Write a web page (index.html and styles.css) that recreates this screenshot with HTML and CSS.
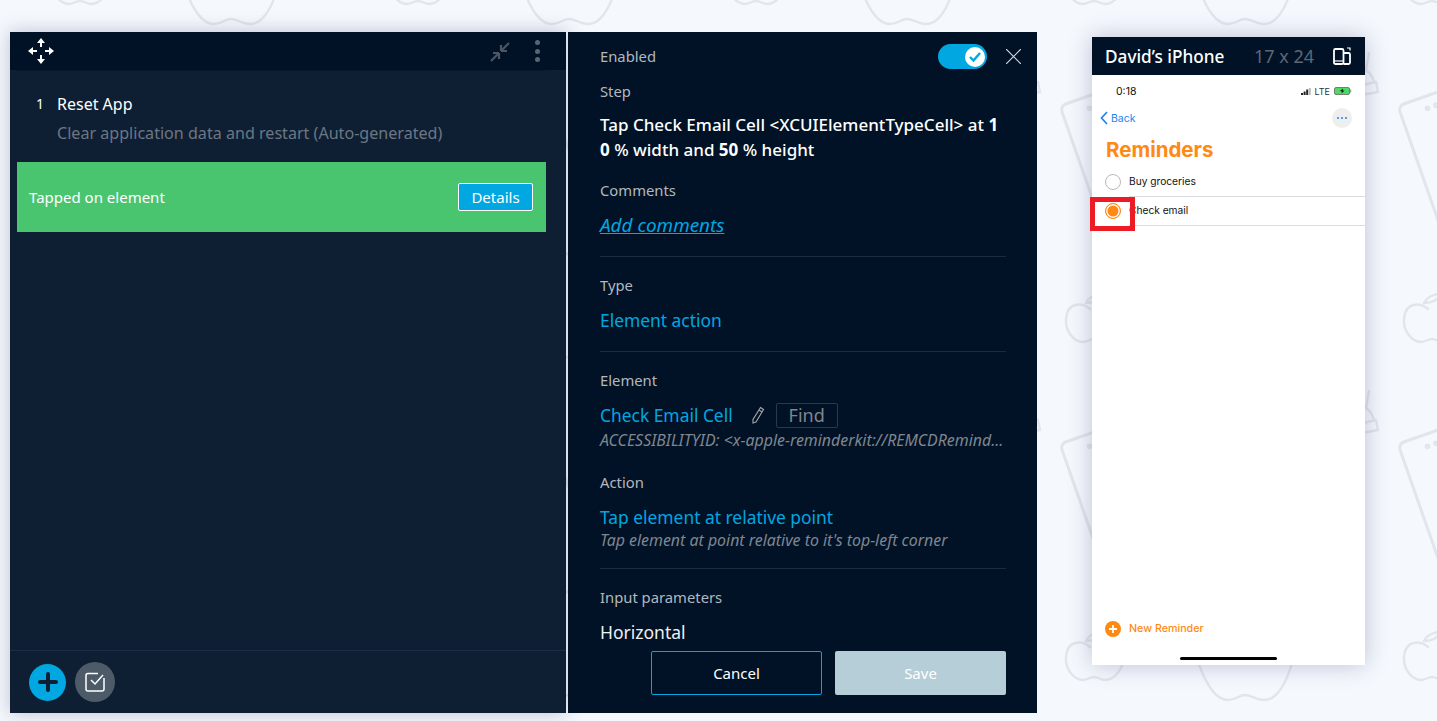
FILE: index.html
```html
<!DOCTYPE html>
<html>
  <head>
    <meta charset="utf-8">
    <title>Test editor</title>
    <link rel="stylesheet" href="styles.css">
  </head>
  <body>
    <!-- background pattern -->
    <svg class="backdrop" width="1437" height="721" aria-hidden="true">
      <defs>
        <pattern id="tile" x="10" y="40" width="338" height="338" patternUnits="userSpaceOnUse">
          <g fill="none" stroke="#e2e5eb" stroke-width="2.4" stroke-linecap="round" stroke-linejoin="round">
            <path d="M66 269 C58 262 43 262 42 279 C41 291 50 302 59 302 C63 302 66 299 70 299 C74 299 77 302 81 302 C88 302 94 296 98 288"/>
            <path d="M62 263 C65 257 72 254 79 254 C76 260 70 263 62 263 Z"/>
            <path d="M160 220 C165 260 180 322 204 322 C212 322 215 317 221 317 C227 317 232 322 240 322 C260 322 270 285 276 250"/>
            <g transform="translate(36 66) rotate(-19.3)">
              <rect x="0" y="0" width="160" height="200" rx="6" stroke-width="3"/>
              <circle cx="27" cy="12" r="1.6"/>
              <circle cx="36" cy="12" r="1.6"/>
            </g>
            <path d="M7 13 L4 30"/>
            <path d="M-12 34 C-4 24 8 28 12 42"/>
            <path d="M-12 48 L14 42 L16 52 L-10 57 Z"/>
          </g>
        </pattern>
      </defs>
      <rect width="1437" height="721" fill="url(#tile)"/>
    </svg>

    <div class="page">

      <!-- steps panel -->
      <div class="steps">
        <div class="steps-head">
          <svg class="move-icon" width="26" height="26" viewBox="0 0 26 26">
            <path fill="#fff" d="M13 0 L17 5 L9 5 Z M13 26 L17 21 L9 21 Z M0 13 L5 9 L5 17 Z M26 13 L21 9 L21 17 Z"/>
            <path stroke="#fff" stroke-width="2" d="M13 5 V9 M13 17 V21 M5 13 H9 M17 13 H21"/>
          </svg>
          <span class="head-spacer"></span>
          <svg class="shrink-icon" width="20" height="20" viewBox="0 0 20 20">
            <path fill="none" stroke="#4c5664" stroke-width="2.2" d="M1 19 L9 11 M9 11 H3 M9 11 V17 M19 1 L11 9 M11 9 H17 M11 9 V3"/>
          </svg>
          <div class="kebab"><i></i><i></i><i></i></div>
        </div>
        <div class="steps-rule"></div>

        <div class="step">
          <span class="step-num">1</span>
          <div>
            <div class="step-title">Reset App</div>
            <div class="step-sub">Clear application data and restart (Auto-generated)</div>
          </div>
        </div>

        <div class="result">
          <span>Tapped on element</span>
          <a class="details">Details</a>
        </div>

        <div class="steps-foot">
          <div class="add-btn">
            <svg width="22" height="22" viewBox="0 0 22 22">
              <path stroke="#0e1f33" stroke-width="4" stroke-linecap="round" d="M11 3 V19 M3 11 H19"/>
            </svg>
          </div>
          <div class="check-btn">
            <svg width="20" height="20" viewBox="0 0 20 20" fill="none" stroke="#fff" stroke-width="1.5">
              <path d="M13 1.5 H3 Q1 1.5 1 3.5 V17 Q1 19 3 19 H17 Q19 19 19 17 V6"/>
              <path d="M6 8 L10 12 L18 3"/>
            </svg>
          </div>
        </div>
      </div>

      <!-- step details -->
      <div class="editor">
        <div class="enabled-row">
          <span class="label">Enabled</span>
          <div class="toggle">
            <div class="knob">
              <svg width="14" height="12" viewBox="0 0 14 12">
                <path fill="none" stroke="#00a7e1" stroke-width="2.4" d="M2 6 L5.5 9.5 L12 2"/>
              </svg>
            </div>
          </div>
          <svg class="close" width="15" height="15" viewBox="0 0 15 15">
            <path stroke="#d5d8dc" stroke-width="1.2" d="M0 0 L15 15 M15 0 L0 15"/>
          </svg>
        </div>

        <div class="label step-label">Step</div>
        <div class="title">Tap Check Email Cell &lt;XCUIElementTypeCell&gt; at <b>1</b><b>0</b> % width and <b>50</b> % height</div>

        <div class="label comments-label">Comments</div>
        <a class="add-comments">Add comments</a>
        <div class="rule"></div>

        <div class="label">Type</div>
        <div class="value">Element action</div>
        <div class="rule"></div>

        <div class="label">Element</div>
        <div class="element-row">
          <span class="value">Check Email Cell</span>
          <svg class="pencil" width="14" height="18" viewBox="0 0 14 18">
            <path fill="none" stroke="#9aa0a8" stroke-width="1.2" d="M9.5 1.5 L12.5 3.5 L5 16 L2 17 L2 13.5 Z M8 4 L11 6"/>
          </svg>
          <span class="find">Find</span>
        </div>
        <div class="hint hint-element">ACCESSIBILITYID: &lt;x-apple-reminderkit://REMCDRemind...</div>

        <div class="label action-label">Action</div>
        <div class="value">Tap element at relative point</div>
        <div class="hint">Tap element at point relative to it's top-left corner</div>
        <div class="rule"></div>

        <div class="label">Input parameters</div>
        <div class="param">Horizontal</div>

        <div class="editor-foot">
          <a class="btn btn-cancel">Cancel</a>
          <a class="btn btn-save">Save</a>
        </div>
      </div>

      <!-- device -->
      <div class="device">
        <div class="device-head">
          <span class="device-name">David’s iPhone</span>
          <span class="device-size">17 x 24</span>
          <svg width="18" height="18" viewBox="0 0 18 18" fill="none" stroke="#fff" stroke-width="1.8">
            <rect x="1" y="2" width="9.5" height="15" rx="1.5"/>
            <path d="M10.5 6 H15.5 Q17 6 17 7.5 V15.5 Q17 17 15.5 17 H10.5"/>
            <path d="M14 1 H17 V3.5" stroke-width="1.2"/>
            <path d="M1 14 H10" stroke-width="1.2"/>
          </svg>
        </div>

        <div class="screen">
          <div class="status">
            <span class="clock">0:18</span>
            <span class="status-right">
              <svg width="10" height="7" viewBox="0 0 10 7" fill="#222">
                <rect x="0" y="5" width="2" height="2"/><rect x="2.6" y="3.5" width="2" height="3.5"/>
                <rect x="5.2" y="1.5" width="2" height="5.5"/><rect x="7.8" y="0" width="2" height="7" fill="#bbb"/>
              </svg>
              <span class="lte">LTE</span>
              <svg width="18" height="8" viewBox="0 0 18 8">
                <rect x="0.5" y="0.5" width="15" height="7" rx="1.5" fill="#4cd964" stroke="#555" stroke-width="0.7"/>
                <path d="M6 4 L9 1.5 L8.5 3.5 L10.5 3.5 L7.5 6.5 L8 4.5 Z" fill="#111"/>
                <rect x="16" y="2.5" width="1.2" height="3" fill="#999"/>
              </svg>
            </span>
          </div>

          <div class="nav">
            <svg width="8" height="14" viewBox="0 0 8 14">
              <path fill="none" stroke="#1e84f0" stroke-width="1.7" d="M7 1 L1.5 7 L7 13"/>
            </svg>
            <span class="back">Back</span>
            <span class="more"><i></i><i></i><i></i></span>
          </div>

          <div class="list-title">Reminders</div>

          <div class="todo">
            <span class="radio"></span>
            <span class="todo-text">Buy groceries</span>
          </div>
          <div class="todo">
            <span class="radio radio-on"></span>
            <span class="todo-text">Check email</span>
            <span class="marker"></span>
          </div>

          <div class="screen-spacer"></div>

          <div class="new-reminder">
            <svg width="16" height="16" viewBox="0 0 16 16">
              <circle cx="8" cy="8" r="8" fill="#ff8a13"/>
              <path stroke="#fff" stroke-width="1.8" d="M8 4 V12 M4 8 H12"/>
            </svg>
            <span>New Reminder</span>
          </div>
          <div class="home-bar"></div>
        </div>
      </div>

    </div>
  </body>
</html>
```

FILE: styles.css
```css
html, body {
    margin: 0;
    height: 721px;
    overflow: hidden;
}

body {
    background-color: #f5f8fd;
    font-family: "Noto Sans", "Open Sans", Arial, sans-serif;
    color: #fff;
    position: relative;
}

a {
    display: block;
}

.backdrop {
    position: absolute;
    left: 0;
    top: 0;
    filter: blur(.5px);
}

.page {
    position: relative;
    display: flex;
    align-items: flex-start;
    padding: 32px 0 0 10px;
}

/* ---- steps panel ---- */
.steps {
    width: 556px;
    height: 681px;
    background-color: #0e1f33;
    box-shadow: 0 0 18px rgba(60, 70, 100, .3);
    display: flex;
    flex-direction: column;
}

.steps-head {
    height: 38px;
    flex: none;
    background-color: #011226;
    display: flex;
    align-items: center;
    padding: 0 26px 0 18px;
}

.head-spacer {
    flex: 1;
}

.shrink-icon {
    margin-right: 25px;
    margin-top: 1px;
}

.kebab {
    display: flex;
    flex-direction: column;
    gap: 3.5px;
}

.kebab i {
    width: 5px;
    height: 5px;
    border-radius: 50%;
    background-color: #5b6572;
}

.steps-rule {
    height: 1px;
    margin: 0 20px 0 7px;
    background-color: #0a1828;
}

.step {
    display: flex;
    height: 91px;
    box-sizing: border-box;
    padding: 21px 0 0 26px;
    font-size: 16px;
    line-height: 24px;
}

.step-num {
    width: 21px;
    font-size: 14px;
}

.step-sub {
    margin-top: 5px;
    font-size: 16.1px;
    color: #6c7783;
}

.result {
    height: 70px;
    flex: none;
    margin: 0 20px 0 7px;
    padding: 0 13px 0 12px;
    background-color: #4ac56f;
    display: flex;
    align-items: center;
    justify-content: space-between;
    font-size: 15px;
}

.details {
    width: 73px;
    height: 26px;
    line-height: 26px;
    text-align: center;
    background-color: #00a7e1;
    border: 1px solid #fff;
    border-radius: 2px;
}

.steps-foot {
    margin-top: auto;
    height: 62px;
    flex: none;
    border-top: 1px solid #1b2d42;
    display: flex;
    align-items: center;
    gap: 9px;
    padding: 0 0 0 19px;
}

.add-btn, .check-btn {
    border-radius: 50%;
    display: flex;
    align-items: center;
    justify-content: center;
}

.add-btn {
    width: 37px;
    height: 37px;
    background-color: #00a7e1;
}

.check-btn {
    width: 40px;
    height: 40px;
    background-color: #4d5a68;
}

/* ---- editor panel ---- */
.editor {
    width: 406px;
    height: 681px;
    margin-left: 2px;
    padding: 0 31px 0 32px;
    background-color: #011226;
    display: flex;
    flex-direction: column;
    overflow: hidden;
}

.label {
    font-size: 14.8px;
    line-height: 20px;
    color: #b3b8bf;
}

.enabled-row {
    height: 47px;
    flex: none;
    display: flex;
    align-items: center;
}

.enabled-row .label {
    flex: 1;
}

.toggle {
    width: 49px;
    height: 25px;
    margin-top: 2px;
    border-radius: 13px;
    background-color: #00a7e1;
    display: flex;
    align-items: center;
    justify-content: flex-end;
    padding-right: 2px;
    box-sizing: border-box;
    margin-right: 19px;
}

.knob {
    width: 20px;
    height: 20px;
    border-radius: 50%;
    background-color: #fff;
    display: flex;
    align-items: center;
    justify-content: center;
}

.close {
    margin-top: 2px;
    margin-right: -15px;
}

.step-label {
    margin-top: 2px;
}

.title {
    margin-top: 11px;
    font-size: 17px;
    line-height: 25px;
    font-weight: 500;
    word-break: break-all;
}

.title b {
    font-weight: 700;
}

.comments-label {
    margin-top: 18px;
}

.add-comments {
    margin-top: 12px;
    font-size: 18.9px;
    line-height: 26px;
    font-style: italic;
    text-decoration: underline;
    color: #00a7e1;
}

.rule {
    height: 1px;
    flex: none;
    margin: 18px 0;
    background-color: #1c2a3c;
}

.value {
    margin-top: 12px;
    font-size: 17.4px;
    line-height: 26px;
    color: #00a7e1;
}

.element-row {
    display: flex;
    align-items: center;
    margin-top: 12px;
    height: 26px;
}

.element-row .value {
    margin-top: 0;
}

.pencil {
    margin-left: 18px;
}

.find {
    margin-left: 11px;
    width: 60px;
    height: 23px;
    line-height: 23px;
    text-align: center;
    font-size: 18px;
    color: #7f868f;
    border: 1px solid #2b3848;
    border-radius: 2px;
}

.hint {
    font-size: 15.9px;
    line-height: 20px;
    font-style: italic;
    color: #7f868f;
    white-space: nowrap;
}

.hint-element {
    margin-top: 2px;
}

.action-label {
    margin-top: 22px;
}

.param {
    margin-top: 12px;
    font-size: 17.5px;
    line-height: 26px;
    color: #eef0f2;
}

.editor-foot {
    display: flex;
    justify-content: flex-end;
    gap: 13px;
    margin-top: 6px;
}

.btn {
    width: 171px;
    height: 44px;
    line-height: 44px;
    box-sizing: border-box;
    text-align: center;
    font-size: 15px;
    border-radius: 2px;
}

.btn-cancel {
    line-height: 42px;
    border: 1px solid #00a7e1;
}

.btn-save {
    background-color: #b5ced7;
}

/* ---- device ---- */
.device {
    width: 273px;
    height: 628px;
    margin: 5px 0 0 55px;
    flex: none;
    background-color: #fff;
    box-shadow: 0 0 22px rgba(70, 80, 120, .32);
    display: flex;
    flex-direction: column;
}

.device-head {
    height: 38px;
    flex: none;
    padding: 0 14px 0 13px;
    background-color: #011226;
    display: flex;
    align-items: center;
    font-size: 18px;
}

.device-name {
    font-size: 17.2px;
    font-weight: 500;
}

.device-size {
    margin: 0 19px 0 auto;
    color: #5c6773;
}

.screen {
    flex: 1;
    display: flex;
    flex-direction: column;
    font-family: Inter, "Noto Sans", sans-serif;
    color: #111;
}

.status {
    height: 32px;
    flex: none;
    padding: 0 13px 0 24px;
    display: flex;
    align-items: center;
    justify-content: space-between;
    font-size: 10.5px;
}

.status-right {
    display: flex;
    align-items: center;
    gap: 4px;
}

.lte {
    font-size: 9px;
    color: #333;
}

.nav {
    height: 22px;
    flex: none;
    padding: 0 13px 0 8px;
    display: flex;
    align-items: center;
    color: #1e84f0;
    font-size: 10.5px;
}

.back {
    margin-left: 3px;
    flex: 1;
}

.more {
    width: 20px;
    height: 20px;
    border-radius: 50%;
    background-color: #eeeeef;
    display: flex;
    align-items: center;
    justify-content: center;
    gap: 1.5px;
}

.more i {
    width: 2.5px;
    height: 2.5px;
    border-radius: 50%;
    background-color: #1e84f0;
}

.list-title {
    margin: 3px 0 0 14px;
    height: 36px;
    line-height: 36px;
    font-size: 20.5px;
    font-weight: 700;
    color: #ff8a13;
}

.todo {
    position: relative;
    height: 29px;
    flex: none;
    display: flex;
    align-items: center;
    padding-left: 13px;
    font-size: 10.2px;
}

.todo-text {
    margin-left: 8px;
    flex: 1;
    height: 29px;
    line-height: 27px;
    border-bottom: 1px solid #dcdcde;
    box-sizing: border-box;
}

.radio {
    width: 16px;
    height: 16px;
    margin-top: -2px;
    box-sizing: border-box;
    border: 1px solid #b9b9bb;
    border-radius: 50%;
}

.radio-on {
    border-color: #ff8a13;
    background-color: #ff8a13;
    box-shadow: inset 0 0 0 1.5px #fff;
}

/* red box drawn by the report over the tapped point */
.marker {
    position: absolute;
    left: -2px;
    top: 0;
    width: 45px;
    height: 34px;
    box-sizing: border-box;
    border: 5px solid #ed1c24;
}

.screen-spacer {
    flex: 1;
}

.new-reminder {
    display: flex;
    align-items: center;
    gap: 8px;
    padding-left: 13px;
    color: #ff8a13;
    font-size: 10.7px;
    font-weight: 500;
}

.home-bar {
    width: 97px;
    height: 3.5px;
    flex: none;
    margin: 20px auto 5px;
    border-radius: 2px;
    background-color: #000;
}
```
